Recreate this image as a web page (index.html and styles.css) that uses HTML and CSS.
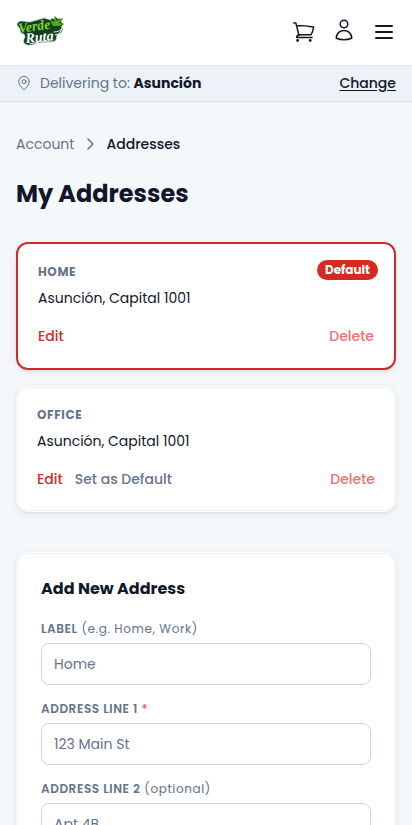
FILE: index.html
```html
<!DOCTYPE html>
<html lang="en">
<head>
<meta charset="utf-8">
<meta name="viewport" content="width=device-width, initial-scale=1">
<title>My Addresses</title>
<link rel="stylesheet" href="styles.css">
</head>
<body>
<header class="header">
  <a class="logo" aria-label="Verde Ruta">
    <svg width="50" height="34" viewBox="0 0 50 34">
      <path class="logo-base" d="M1 10Q1 6 6 6L14 7 28 3 35 5 35 3 38 4 39 1 42 4 47 3 45 7 48 9 45 12 47 13Q47 18 41 20L40 25Q38 28 33 27L21 28Q14 32 9 29 6 27 9 22L8 19Q4 19 4 14Z"/>
      <path class="logo-leaf" d="M37 11L34 5 38 7 39 1 41 6 47 3 43 8 48 9 43 11Z"/>
      <path class="logo-swash" d="M38 17Q44 17 46 13Q45 19 39 20M14 29Q25 25 37 26"/>
      <text class="logo-verde" x="3" y="18" textLength="32" lengthAdjust="spacingAndGlyphs" transform="rotate(-8 3 18)">Verde</text>
      <text class="logo-ruta" x="10" y="28" textLength="28" lengthAdjust="spacingAndGlyphs" transform="rotate(-6 10 28)">Ruta</text>
    </svg>
  </a>
  <nav class="actions">
    <svg class="cart" width="24" height="24" viewBox="0 0 24 24"><path d="M1.8 3.100H3.900L7 15.500M4.700 5.600Q13 5.600 21.600 7.100Q21 11.500 19.200 14.700H7.100Q4.500 15.100 4.700 17.600H20"/><circle cx="5.600" cy="20.500" r="1.400"/><circle cx="18.200" cy="20.500" r="1.400"/></svg>
    <svg class="user" width="24" height="24" viewBox="0 0 24 24"><circle cx="12" cy="6" r="3.8"/><path d="M4.3 20.2C4.3 9.9 19.7 9.9 19.7 20.2Q12 23.3 4.3 20.2Z"/></svg>
    <svg class="menu" width="24" height="24" viewBox="0 0 24 24"><path d="M4 6H20M4 12H20M4 18H20"/></svg>
  </nav>
</header>
<section class="delivery">
  <svg class="pin" width="16" height="16" viewBox="0 0 24 24"><path d="M20 10c0 5-5.5 10.200-7.400 11.800a1 1 0 0 1-1.200 0C9.500 20.200 4 15 4 10a8 8 0 0 1 16 0"/><circle cx="12" cy="10" r="3"/></svg>
  <span class="delivery-text">Delivering to:</span>
  <strong class="city">Asunción</strong>
  <a class="change">Change</a>
</section>
<main class="main">
  <nav class="crumbs">
    <a class="crumb">Account</a>
    <svg width="16" height="16" viewBox="0 0 16 16"><path d="M6 3L11 8 6 13"/></svg>
    <span class="current">Addresses</span>
  </nav>
  <h1 class="title">My Addresses</h1>
  <div class="list">
    <article class="card selected">
      <span class="badge">Default</span>
      <h2 class="name">Home</h2>
      <p class="address">Asunción, Capital 1001</p>
      <div class="row"><a class="edit">Edit</a><a class="delete">Delete</a></div>
    </article>
    <article class="card">
      <h2 class="name">Office</h2>
      <p class="address">Asunción, Capital 1001</p>
      <div class="row"><a class="edit">Edit</a><a class="set">Set as Default</a><a class="delete">Delete</a></div>
    </article>
  </div>
  <form class="form">
    <h2 class="form-title">Add New Address</h2>
    <label class="field"><span class="label"><b>LABEL</b> (e.g. Home, Work)</span><input class="input" placeholder="Home"></label>
    <label class="field"><span class="label"><b>ADDRESS LINE 1 <i class="required">*</i></b></span><input class="input" placeholder="123 Main St"></label>
    <label class="field"><span class="label"><b>ADDRESS LINE 2</b> (optional)</span><input class="input" placeholder="Apt 4B"></label>
  </form>
</main>
</body>
</html>
```
FILE: styles.css
```css
* { box-sizing: border-box; }
html { height: 100%; overflow: hidden; }
body { margin: 0; height: 100%; overflow: hidden; background: #f4f8fb; color: #0f172a; font: 14px/20px Poppins, Inter, sans-serif; }
h1, h2, p { margin: 0; }
svg { flex: none; fill: none; stroke: currentColor; stroke-linecap: round; stroke-linejoin: round; }
.header { height: 65px; padding: 0 16px 1px; display: flex; align-items: center; justify-content: space-between; background: #fff; }
.logo { display: flex; }
.logo-base { fill: #124020; stroke: #d9eadb; stroke-width: .6; }
.logo-leaf { fill: #55a91c; stroke: none; }
.logo-swash { stroke: #f2f9ee; stroke-width: 1; }
.logo-verde, .logo-ruta { stroke: none; font: italic bold 14px "Liberation Serif", serif; }
.logo-verde { fill: #85d321; }
.logo-ruta { fill: #fff; }
.actions { display: flex; align-items: center; gap: 16px; }
.cart { stroke-width: 1.5; }
.cart circle { fill: currentColor; stroke: none; }
.user { stroke-width: 1.5; margin-bottom: 5px; }
.menu { stroke-width: 2; }
.delivery { height: 37px; padding: 0 16px 2px; display: flex; align-items: center; background: #edf2f8; border: solid #dae2eb; border-width: 1px 0; color: #64748b; }
.pin { stroke-width: 1.5; margin-right: 8px; }
.city { margin-left: 3.5px; color: #0f172a; }
.change { margin-left: auto; color: #0f172a; font-weight: 500; text-decoration: underline; text-underline-offset: 2px; }
.main { padding: 32px 16px 0; }
.crumbs { display: flex; align-items: center; gap: 8px; color: #64748b; }
.crumbs svg { stroke-width: 1.5; }
.current { color: #0f172a; font-weight: 500; }
.title { margin: 24px 0 32px; font-size: 24px; line-height: 32px; font-weight: 700; }
.list { display: grid; gap: 16px; }
.card, .form { background: #fff; border: 1px solid #fcfdfd; border-radius: 12px; box-shadow: inset 0 0 0 1px #eef0f2, 0 2px 8px #0f172a12, 0 1px 2px #0f172a12; }
.card { position: relative; height: 126px; padding: 20px; }
.card.selected { height: 128px; border: 2px solid #c92d26; box-shadow: 0 2px 8px #0f172a12, 0 1px 2px #0f172a12; }
.badge { position: absolute; top: 16px; right: 16px; height: 20px; padding: 0 8px; border-radius: 10px; background: #d52b1e; color: #fff; font-size: 12px; font-weight: 700; }
.name { font-size: 12px; line-height: 16px; font-weight: 700; letter-spacing: .6px; text-transform: uppercase; color: #64748b; }
.address { margin-top: 8px; }
.row { display: flex; gap: 12px; margin-top: 18px; font-weight: 500; }
.edit { color: #d52b1e; }
.set { color: #64748b; }
.delete { color: #ef7070; margin-left: auto; }
.form { margin-top: 40px; padding: 24px; height: 420px; }
.form-title { font-size: 16px; line-height: 24px; font-weight: 700; margin-bottom: 18px; }
.field { display: block; margin-bottom: 14px; }
.label { display: block; height: 24px; line-height: 20px; font-size: 12px; letter-spacing: .6px; color: #64748b; white-space: nowrap; }
.label b { font-weight: 600; }
.required { color: #ef6262; font-style: normal; }
.input { display: block; width: 100%; height: 42px; padding: 0 12px; border: 1px solid #cbd5e1; border-radius: 8px; background: #fff; font: inherit; }
.input::placeholder { color: #64748b; opacity: 1; }
```
